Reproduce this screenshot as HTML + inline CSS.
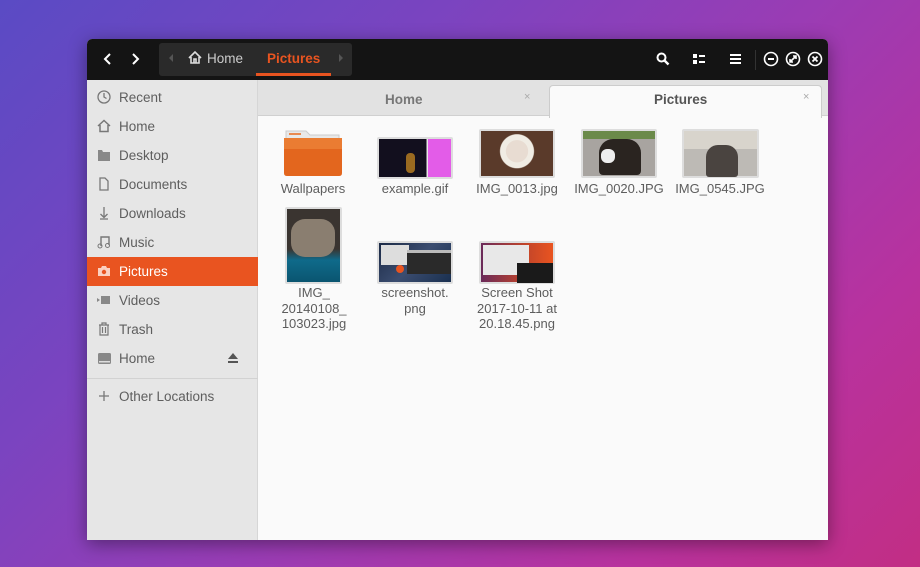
<!DOCTYPE html>
<html><head><meta charset="utf-8"><style>
*{margin:0;padding:0;box-sizing:border-box}
body{width:920px;height:567px;overflow:hidden;font-family:"Liberation Sans",sans-serif;position:relative;
background:linear-gradient(135deg,#5a4bc4 0%,#7a44c0 30%,#9a3cb4 55%,#b8329e 80%,#c22e84 100%)}
.abs{position:absolute}
.win{left:87px;top:39px;width:741px;height:501px;background:#fafafa;box-shadow:0 4px 18px rgba(0,0,0,.4);border-radius:5px 5px 0 0;overflow:hidden}
.hdr{left:0;top:0;width:741px;height:41px;background:#141414}
.side{left:0;top:41px;width:171px;height:460px;background:#e6e6e6;border-right:1px solid #d6d6d6}
.si{position:absolute;left:0;width:171px;height:29px;font-size:13.5px;color:#5e5e5e;line-height:29px;padding-left:32px}
.si svg{position:absolute;left:10px;top:7px}
.sel{background:#e95420;color:#fff}
.lbl{position:absolute;font-size:13px;color:#5d5d5d;text-align:center;width:100px;line-height:15.5px}
.th{position:absolute;border:2px solid #ddd;border-radius:2px}
</style></head><body>
<div class="abs win">
 <div class="abs hdr">
  <svg class="abs" style="left:16px;top:13px" width="50" height="14"><path d="M7 2 2 7 7 12M30 2 35 7 30 12" stroke="#fff" stroke-width="2" fill="none"/></svg>
  <div class="abs" style="left:72px;top:4px;width:193px;height:33px;background:#2a2a2a;border-radius:3px"></div>
  <svg class="abs" style="left:80px;top:14px" width="8" height="10"><path d="M6 1 2 5 6 9" fill="#555"/></svg>
  <svg class="abs" style="left:250px;top:14px" width="8" height="10"><path d="M2 1 6 5 2 9" fill="#555"/></svg>
  <svg class="abs" style="left:101px;top:12px" width="14" height="13"><path d="M1 7 7 1 13 7M3 6V12H11V6M6 12V8H8V12" stroke="#ddd" stroke-width="1.6" fill="none"/></svg>
  <div class="abs" style="left:120px;top:12px;font-size:13.5px;color:#ccc">Home</div>
  <div class="abs" style="left:180px;top:12px;font-size:13.5px;color:#e95420;font-weight:bold">Pictures</div>
  <div class="abs" style="left:169px;top:34px;width:75px;height:3px;background:#e95420"></div>
  <svg class="abs" style="left:569px;top:13px" width="14" height="14"><circle cx="5.5" cy="5.5" r="4" stroke="#fff" stroke-width="2" fill="none"/><path d="M8.5 8.5 12.5 12.5" stroke="#fff" stroke-width="2.4"/></svg>
  <svg class="abs" style="left:606px;top:14px" width="12" height="12"><rect x="0" y="1" width="4" height="4" fill="#fff"/><rect x="0" y="7" width="4" height="4" fill="#fff"/><rect x="6" y="2" width="6" height="2" fill="#fff"/><rect x="6" y="8" width="6" height="2" fill="#fff"/></svg>
  <svg class="abs" style="left:643px;top:14px" width="12" height="12"><path d="M0 2H11M0 6H11M0 10H11" stroke="#fff" stroke-width="2"/></svg>
  <div class="abs" style="left:668px;top:11px;width:1px;height:20px;background:#333"></div>
  <svg class="abs" style="left:676px;top:12px" width="60" height="16"><g stroke="#fff" stroke-width="1.6" fill="none"><circle cx="8" cy="8" r="6.5"/><circle cx="30" cy="8" r="6.5"/><circle cx="52" cy="8" r="6.5"/></g><path d="M5 8H11" stroke="#fff" stroke-width="2"/><path d="M27 11 33 5M30 5H33V8M27 8V11H30" stroke="#fff" stroke-width="1.6" fill="none"/><path d="M49.5 5.5 54.5 10.5M54.5 5.5 49.5 10.5" stroke="#fff" stroke-width="1.8"/></svg>
 </div>
 <div class="abs side">
  <div class="si" style="top:3px"><svg width="14" height="14"><circle cx="7" cy="7" r="6" stroke="#777" stroke-width="1.3" fill="none"/><path d="M7 3V7L9.5 8.5" stroke="#777" stroke-width="1.3" fill="none"/></svg>Recent</div>
  <div class="si" style="top:32px"><svg width="14" height="14"><path d="M1 7 7 1.5 13 7M3 6V12.5H11V6" stroke="#777" stroke-width="1.5" fill="none"/></svg>Home</div>
  <div class="si" style="top:61px"><svg width="14" height="14"><path d="M1 2H5L6 4H13V13H1Z" fill="#888"/></svg>Desktop</div>
  <div class="si" style="top:90px"><svg width="14" height="14"><path d="M3 1H8L11 4V13H3Z" stroke="#777" stroke-width="1.3" fill="none"/></svg>Documents</div>
  <div class="si" style="top:119px"><svg width="14" height="14"><path d="M7 1V11M3.5 8 7 11.5 10.5 8M3 13H11" stroke="#777" stroke-width="1.3" fill="none"/></svg>Downloads</div>
  <div class="si" style="top:148px"><svg width="14" height="14"><path d="M4 11V2H12V10" stroke="#777" stroke-width="1.4" fill="none"/><circle cx="3" cy="11" r="2" stroke="#777" fill="none"/><circle cx="10.5" cy="10.5" r="2" stroke="#777" fill="none"/></svg>Music</div>
  <div class="si sel" style="top:177px"><svg width="14" height="14"><path d="M1 4H4L5 2H9L10 4H13V12H1Z" fill="#fbd0c0"/><circle cx="7" cy="8" r="2.2" fill="#e95420"/></svg>Pictures</div>
  <div class="si" style="top:206px"><svg width="14" height="14"><rect x="4" y="3" width="9" height="8" fill="#888"/><path d="M0 5 3 7 0 9Z" fill="#888"/></svg>Videos</div>
  <div class="si" style="top:235px"><svg width="14" height="14"><path d="M2 3H12M5 3V1H9V3M3 3V13H11V3M5.5 5V11M8.5 5V11" stroke="#777" stroke-width="1.2" fill="none"/></svg>Trash</div>
  <div class="si" style="top:264px"><svg width="14" height="14"><rect x="1" y="2" width="13" height="11" rx="1.5" fill="#888"/><rect x="2" y="10" width="11" height="1.5" fill="#ddd"/></svg>Home<svg style="left:140px;top:8px" width="12" height="12"><path d="M6 1 11 7H1Z M1 9H11V11H1Z" fill="#555"/></svg></div>
  <div class="abs" style="left:0;top:298px;width:171px;height:1px;background:#d2d2d2"></div>
  <div class="si" style="top:302px"><svg width="14" height="14"><path d="M7 2V12M2 7H12" stroke="#777" stroke-width="1.3"/></svg>Other Locations</div>
 </div>
 <!-- tabs -->
 <div class="abs" style="left:171px;top:41px;width:570px;height:36px;background:#e2e2e2;border-bottom:1px solid #d0d0d0"></div>
 <div class="abs" style="left:298px;top:53px;font-size:13.5px;color:#777;font-weight:bold">Home</div>
 <div class="abs" style="left:437px;top:52px;font-size:11px;color:#aaa">×</div>
 <div class="abs" style="left:462px;top:46px;width:273px;height:33px;background:#fafafa;border:1px solid #ccc;border-bottom:none;border-radius:4px 4px 0 0"></div>
 <div class="abs" style="left:567px;top:53px;font-size:13.5px;color:#555;font-weight:bold">Pictures</div>
 <div class="abs" style="left:716px;top:52px;font-size:11px;color:#aaa">×</div>
</div>
<!-- icons (page coords) -->
<svg class="abs" style="left:284px;top:129px" width="58" height="48"><path d="M2 2H22L26 6H55V46H2Z" fill="#e8e8e8" stroke="#ccc"/><rect x="5" y="4" width="12" height="2" fill="#e98a50"/><path d="M0 9H58V44Q58 47 55 47H3Q0 47 0 44Z" fill="#e3661e"/><path d="M0 9H58V20H0Z" fill="#ef8a40" opacity=".6"/></svg>
<div class="th" style="left:377px;top:137px;width:76px;height:42px;background:linear-gradient(90deg,#120f1e 0 66%,#e8e8e8 66% 68%,#e35ce8 68%)"><div class="abs" style="left:27px;top:14px;width:9px;height:20px;background:#9a6a20;border-radius:4px"></div></div>
<div class="th" style="left:479px;top:129px;width:76px;height:49px;background:radial-gradient(circle at 50% 45%,#e8dcd2 0 25%,#f0ece4 26% 38%,#5a3a2a 40%)"></div>
<div class="th" style="left:581px;top:129px;width:76px;height:49px;background:linear-gradient(180deg,#6b8a4a 0 18%,#a8a4a0 18%)"><div class="abs" style="left:16px;top:8px;width:42px;height:36px;background:#2a2420;border-radius:14px 14px 4px 4px"></div><div class="abs" style="left:18px;top:18px;width:14px;height:14px;background:#eee;border-radius:6px"></div></div>
<div class="th" style="left:682px;top:129px;width:77px;height:49px;background:linear-gradient(180deg,#d8d4cc 0 40%,#bdbab5 40%)"><div class="abs" style="left:22px;top:14px;width:32px;height:32px;background:#4a4440;border-radius:12px 12px 3px 3px"></div></div>
<div class="th" style="left:285px;top:207px;width:57px;height:77px;background:linear-gradient(180deg,#3a3430 0 55%,#0f6a8a 70%,#0a5570)"><div class="abs" style="left:4px;top:10px;width:44px;height:38px;background:#8a7e70;border-radius:14px"></div></div>
<div class="th" style="left:377px;top:241px;width:76px;height:43px;background:linear-gradient(135deg,#1c2a46,#3b4d70 50%,#1a3050)"><div class="abs" style="left:2px;top:2px;width:28px;height:20px;background:#ddd"></div><div class="abs" style="left:28px;top:7px;width:44px;height:24px;background:#2a2a2a;border-top:3px solid #bbb"></div><div class="abs" style="left:17px;top:22px;width:8px;height:8px;background:#e95420;border-radius:4px"></div></div>
<div class="th" style="left:479px;top:241px;width:76px;height:43px;background:linear-gradient(90deg,#6a2a5a,#c0442a 60%,#e95420)"><div class="abs" style="left:2px;top:2px;width:46px;height:30px;background:#e8e8e8"></div><div class="abs" style="left:36px;top:20px;width:36px;height:20px;background:#1a1a1a"></div></div>
<div class="lbl" style="left:263px;top:181px">Wallpapers</div>
<div class="lbl" style="left:365px;top:181px">example.gif</div>
<div class="lbl" style="left:467px;top:181px">IMG_0013.jpg</div>
<div class="lbl" style="left:569px;top:181px">IMG_0020.JPG</div>
<div class="lbl" style="left:670px;top:181px">IMG_0545.JPG</div>
<div class="lbl" style="left:264px;top:285px">IMG_<br>20140108_<br>103023.jpg</div>
<div class="lbl" style="left:365px;top:285px">screenshot.<br>png</div>
<div class="lbl" style="left:467px;top:285px">Screen Shot<br>2017-10-11 at<br>20.18.45.png</div>
</body></html>
